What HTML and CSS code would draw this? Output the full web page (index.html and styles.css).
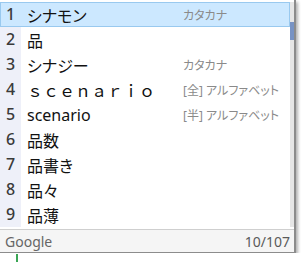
FILE: index.html
```html
<!DOCTYPE html>
<html lang="ja">
<head>
    <meta charset="UTF-8">
    <title>変換候補</title>
    <link rel="stylesheet" href="styles.css">
</head>
<body>
    <div class="ime-window">
        <div class="list">
            <div class="rows">
                <div class="row selected"><span class="num">1</span><span class="cand">シナモン</span><span class="note">カタカナ</span></div>
                <div class="row"><span class="num">2</span><span class="cand">品</span><span class="note"></span></div>
                <div class="row"><span class="num">3</span><span class="cand">シナジー</span><span class="note">カタカナ</span></div>
                <div class="row"><span class="num">4</span><span class="cand wide">ｓｃｅｎａｒｉｏ</span><span class="note">[全] アルファベット</span></div>
                <div class="row"><span class="num">5</span><span class="cand">scenario</span><span class="note">[半] アルファベット</span></div>
                <div class="row"><span class="num">6</span><span class="cand">品数</span><span class="note"></span></div>
                <div class="row"><span class="num">7</span><span class="cand">品書き</span><span class="note"></span></div>
                <div class="row"><span class="num">8</span><span class="cand">品々</span><span class="note"></span></div>
                <div class="row"><span class="num">9</span><span class="cand">品薄</span><span class="note"></span></div>
            </div>
            <div class="scrollbar"><div class="thumb"></div></div>
        </div>
        <div class="footer">
            <span class="brand">Google</span>
            <span class="count">10/107</span>
        </div>
    </div>
    <div class="caret"></div>
</body>
</html>
```

FILE: styles.css
```css
body {
    margin: 0;
    padding: 0;
    background: #ffffff;
    font-family: "Noto Sans", "Noto Sans CJK JP", sans-serif;
    font-feature-settings: "palt";
}

.ime-window {
    width: 294px;
    background: #ffffff;
    border-right: 2px solid #8c8c8c;
    border-bottom: 1px solid #8c8c8c;
    box-shadow: 2px 2px 3px rgba(0, 0, 0, 0.3);
}

.list {
    display: flex;
    padding-top: 2px;
    padding-bottom: 2px;
}

.rows {
    flex: 1;
}

.row {
    display: grid;
    grid-template-columns: 21px 162px 1fr;
    height: 25px;
    align-items: center;
}

.num {
    height: 100%;
    line-height: 25px;
    background: #eef0f9;
    color: #3a3a3a;
    font-size: 16px;
    font-weight: 500;
    text-align: center;
}

.cand {
    padding-left: 6px;
    font-size: 16px;
    color: #111;
    white-space: nowrap;
}

/* 全角英字は等幅のまま */
.wide {
    font-feature-settings: normal;
}

.note {
    font-size: 12px;
    color: #8a8a8a;
    white-space: nowrap;
}

.selected {
    background: #cce8ff;
    box-shadow: inset 0 0 0 1px #99c9ef;
}

.selected .num {
    background: transparent;
}

.scrollbar {
    width: 4px;
    background: #e6e6e6;
    padding-top: 20px;
}

.thumb {
    height: 18px;
    background: #7893c4;
}

.footer {
    display: flex;
    justify-content: space-between;
    align-items: center;
    height: 22px;
    padding: 0 4px 0 5px;
    border-top: 1px solid #cfcfcf;
    background: #f5f5f5;
    color: #666;
}

.brand {
    font-size: 14px;
}

.count {
    font-size: 14px;
    color: #5a5a5a;
}

.caret {
    position: absolute;
    left: 16px;
    top: 254px;
    width: 2px;
    height: 8px;
    background: #3aa655;
}
```
